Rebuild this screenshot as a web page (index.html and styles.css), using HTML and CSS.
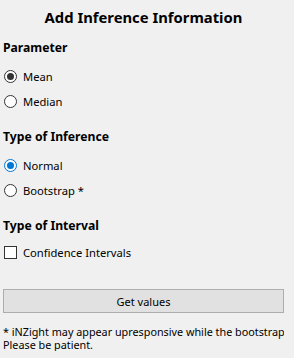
FILE: index.html
```html
<!DOCTYPE html>
<html>
<head>
    <title>Add Inference Information</title>
    <link rel="stylesheet" href="styles.css">
</head>
<body>
    <div class="panel">
        <h1 class="title">Add Inference Information</h1>

        <div class="section">
            <h2 class="section-title">Parameter</h2>
            <div class="options">
                <label class="option"><span class="radio checked"></span>Mean</label>
                <label class="option"><span class="radio"></span>Median</label>
            </div>
        </div>

        <div class="section">
            <h2 class="section-title">Type of Inference</h2>
            <div class="options">
                <label class="option"><span class="radio checked focus"></span>Normal</label>
                <label class="option"><span class="radio"></span>Bootstrap *</label>
            </div>
        </div>

        <div class="section">
            <h2 class="section-title">Type of Interval</h2>
            <div class="options options-check">
                <label class="option"><span class="checkbox"></span>Confidence Intervals</label>
            </div>
        </div>

        <button class="get-values" type="button">Get values</button>

        <p class="footnote">* iNZight may appear upresponsive while the bootstrap is running.<br>Please be patient.</p>
    </div>
</body>
</html>
```

FILE: styles.css
```css
body {
    margin: 0;
    padding: 0;
    background-color: #f0f0f0;
    color: #000;
    font-family: "Noto Sans", "Open Sans", sans-serif;
    font-size: 11.2px;
}
.panel {
    width: 281px;
    padding-left: 3px;
    overflow: hidden;
}
.title {
    margin: 0;
    height: 34px;
    line-height: 34px;
    text-align: center;
    font-size: 14.8px;
    font-weight: bold;
}
.section-title {
    margin: 4px 0 0 0;
    height: 20px;
    line-height: 20px;
    font-size: 12.2px;
    font-weight: bold;
}
.section + .section .section-title {
    margin-top: 13px;
}
.options {
    padding-top: 6px;
}
.options-check {
    padding-top: 4px;
}
.option {
    display: flex;
    align-items: center;
    height: 25px;
    gap: 6px;
    padding-left: 1px;
}
.radio {
    box-sizing: border-box;
    width: 13px;
    height: 13px;
    border: 1px solid #333;
    border-radius: 50%;
    background-color: #fff;
    display: flex;
    align-items: center;
    justify-content: center;
}
.radio.checked::after {
    content: "";
    width: 7px;
    height: 7px;
    border-radius: 50%;
    background-color: #333;
}
.radio.focus {
    border-color: #0078d7;
}
.radio.focus::after {
    background-color: #0078d7;
}
.checkbox {
    box-sizing: border-box;
    width: 13px;
    height: 13px;
    border: 1px solid #333;
    background-color: #fff;
}
.get-values {
    display: block;
    width: 281px;
    height: 24px;
    margin-top: 24px;
    padding: 0;
    background-color: #e1e1e1;
    border: 1px solid #adadad;
    font-family: inherit;
    font-size: 11px;
    color: #000;
}
.footnote {
    margin: 12px 0 0 0;
    line-height: 13px;
    font-size: 10.8px;
    white-space: nowrap;
}
```
